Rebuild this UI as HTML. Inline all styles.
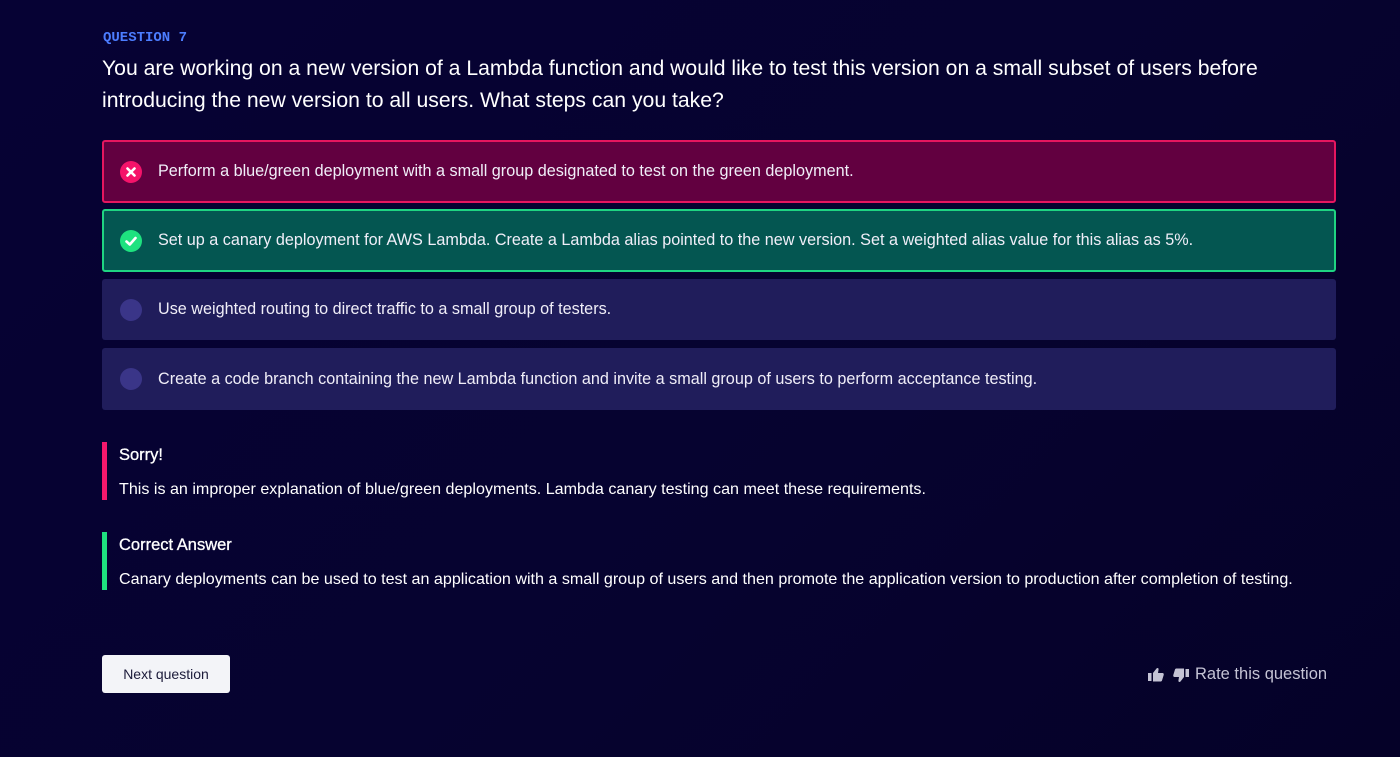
<!DOCTYPE html>
<html><head><style>
body{margin:0;width:1400px;height:757px;background:linear-gradient(135deg,#060234 0%,#06032f 60%,#050128 100%);font-family:"Liberation Sans",sans-serif;color:#fff;position:relative;overflow:hidden}
.lbl{position:absolute;left:103px;top:30px;font:bold 14px "Liberation Mono",monospace;color:#4c7dff}
.q{position:absolute;left:102px;top:53px;width:1220px;font-size:21.2px;line-height:31.5px;color:#fff}
.card{position:absolute;left:102px;width:1234px;box-sizing:border-box;border-radius:3px;font-size:16.2px;display:flex;align-items:center;padding-left:56px;color:#f0eef8}
.ic{position:absolute;left:18px;top:50%;margin-top:-11px;width:22px;height:22px;border-radius:50%}
.fb{position:absolute;left:102px;border-left:5px solid;padding-left:12px;font-size:16.1px}
.fb b{display:block;font-weight:normal;font-size:16.5px;margin-top:4px;margin-bottom:15px;-webkit-text-stroke:0.3px #fff}
.btn{position:absolute;left:102px;top:655px;width:128px;height:38px;background:#f3f4f8;border-radius:3px;color:#1c1b3a;font-size:14px;display:flex;align-items:center;justify-content:center}
.rate{position:absolute;left:1147px;top:665px;font-size:16.5px;color:#c4c3d4;display:flex;align-items:center;gap:4px}
</style></head><body>
<div class="lbl">QUESTION 7</div>
<div class="q">You are working on a new version of a Lambda function and would like to test this version on a small subset of users before introducing the new version to all users. What steps can you take?</div>

<div class="card" style="top:140px;height:63px;background:#620040;border:2px solid #e5165f;padding-left:54px"><span class="ic" style="background:#f5136a;left:16px"><svg width="22" height="22" viewBox="0 0 22 22"><path d="M7.5 7.5L14.5 14.5M14.5 7.5L7.5 14.5" stroke="#fff" stroke-width="2.6" stroke-linecap="round"/></svg></span>Perform a blue/green deployment with a small group designated to test on the green deployment.</div>
<div class="card" style="top:209px;height:63px;background:#045651;border:2px solid #1fd482;padding-left:54px"><span class="ic" style="background:#1ee27f;left:16px"><svg width="22" height="22" viewBox="0 0 22 22"><path d="M6.5 11.5L9.8 14.5L15.5 8" stroke="#fff" stroke-width="2.6" fill="none" stroke-linecap="round" stroke-linejoin="round"/></svg></span>Set up a canary deployment for AWS Lambda. Create a Lambda alias pointed to the new version. Set a weighted alias value for this alias as 5%.</div>
<div class="card" style="top:279px;height:61px;background:#201d5b"><span class="ic" style="background:#3a3588"></span>Use weighted routing to direct traffic to a small group of testers.</div>
<div class="card" style="top:348px;height:62px;background:#201d5b"><span class="ic" style="background:#3a3588"></span>Create a code branch containing the new Lambda function and invite a small group of users to perform acceptance testing.</div>

<div class="fb" style="top:442px;height:58px;border-color:#f5186c"><b>Sorry!</b>This is an improper explanation of blue/green deployments. Lambda canary testing can meet these requirements.</div>
<div class="fb" style="top:532px;height:58px;border-color:#1ee27f"><b>Correct Answer</b>Canary deployments can be used to test an application with a small group of users and then promote the application version to production after completion of testing.</div>

<div class="btn">Next question</div>
<div class="rate">
<svg width="18" height="16" viewBox="0 0 18 16"><rect x="1" y="6" width="3.5" height="8" fill="#c4c3d4"/><path d="M6 6L9.5 1.5C10.5 0.5 12 1 11.5 3L11 6H15.5C16.5 6 17 7 16.7 8L15 13.5C14.7 14.2 14.2 14.5 13.5 14.5H6Z" fill="#c4c3d4"/></svg>
<svg width="18" height="16" viewBox="0 0 18 16" style="margin-left:3px"><rect x="13.5" y="2" width="3.5" height="8" fill="#c4c3d4"/><path d="M12 10L8.5 14.5C7.5 15.5 6 15 6.5 13L7 10H2.5C1.5 10 1 9 1.3 8L3 2.5C3.3 1.8 3.8 1.5 4.5 1.5H12Z" fill="#c4c3d4"/></svg>
<span style="margin-left:1px">Rate this question</span></div>
</body></html>
